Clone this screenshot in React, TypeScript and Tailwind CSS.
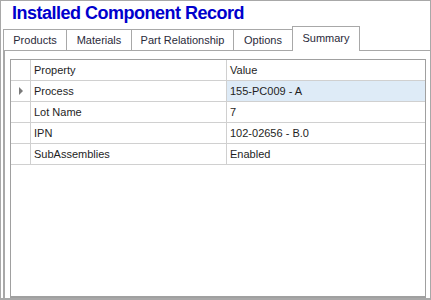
import React from "react";

const tabs = [
  { label: "Products", w: "w-[64px]" },
  { label: "Materials", w: "w-[66px]" },
  { label: "Part Relationship", w: "w-[103px]" },
  { label: "Options", w: "w-[60px]" },
];

const rows = [
  { prop: "Process", value: "155-PC009 - A", current: true },
  { prop: "Lot Name", value: "7" },
  { prop: "IPN", value: "102-02656 - B.0" },
  { prop: "SubAssemblies", value: "Enabled" },
];

const App = () => {
  return (
    <div
      className="w-[431px] h-[300px] bg-white border border-[#a8a8a8] border-b-2 flex flex-col text-[#1e1e1e] text-[11px] overflow-hidden"
      style={{ fontFamily: '"Liberation Sans", Arial, sans-serif' }}
    >
      {/* Title */}
      <div className="h-[25px] pl-[11px] pt-[1px] text-[18px] leading-[22px] font-bold tracking-[-0.5px] text-[#0000cd]">
        Installed Component Record
      </div>

      {/* Tabs */}
      <div className="flex items-end h-[24px] pl-[2px]">
        {tabs.map((t) => (
          <div
            key={t.label}
            className={`${t.w} h-[21px] -mr-px border border-b-0 border-[#a8a8a8] flex items-center justify-center text-[#2a2a3a]`}
          >
            {t.label}
          </div>
        ))}
        <div className="relative z-10 w-[68px] h-[25px] -mb-px border border-b-0 border-[#a8a8a8] bg-white flex items-start justify-center pt-[3px] text-[#2a2a3a]">
          Summary
        </div>
      </div>

      {/* Tab panel */}
      <div className="flex-1 ml-[2px] border-l-2 border-t border-[#a8a8a8] pt-[8px] pl-[5px] pr-[4px] flex flex-col">
        <div className="flex-1 border border-[#a0a0a0] border-b-2">
          {/* Header */}
          <div className="flex h-[21px] border-b border-[#d0d0d0]">
            <div className="w-[20px] border-r border-[#d0d0d0]" />
            <div className="w-[196px] border-r border-[#d0d0d0] pl-[3px] flex items-center">Property</div>
            <div className="flex-1 pl-[3px] flex items-center">Value</div>
          </div>
          {rows.map((r) => (
            <div key={r.prop} className="flex h-[21px] border-b border-[#d0d0d0]">
              <div className="w-[20px] border-r border-[#d0d0d0] flex items-center justify-center">
                {r.current && (
                  <span className="w-0 h-0 border-y-[4px] border-y-transparent border-l-[4px] border-l-[#7a7a7a]" />
                )}
              </div>
              <div className="w-[196px] border-r border-[#d0d0d0] pl-[3px] flex items-center">{r.prop}</div>
              <div className={`flex-1 pl-[3px] flex items-center ${r.current ? "bg-[#deebf7]" : ""}`}>{r.value}</div>
            </div>
          ))}
        </div>
      </div>
    </div>
  );
};

export default App;
